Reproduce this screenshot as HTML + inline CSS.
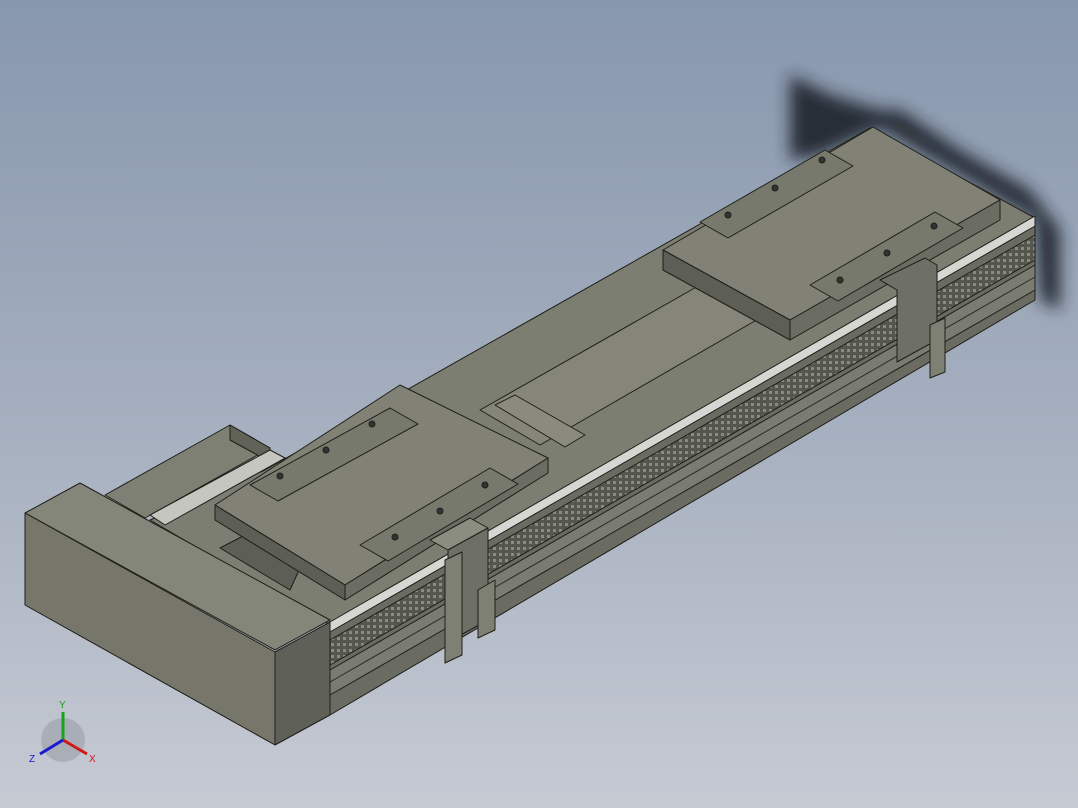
<!DOCTYPE html>
<html><head><meta charset="utf-8"><style>
html,body{margin:0;padding:0;width:1078px;height:808px;overflow:hidden}
body{background:linear-gradient(180deg,#8797ad 0%,#a4aebe 50%,#c6cad3 100%)}
svg{position:absolute;left:0;top:0}
</style></head><body>
<svg width="1078" height="808" viewBox="0 0 1078 808" font-family="Liberation Sans, sans-serif">
<defs>
<filter id="b" x="-20%" y="-20%" width="140%" height="140%"><feGaussianBlur stdDeviation="8"/></filter>
<pattern id="belt" width="6" height="6" patternUnits="userSpaceOnUse"><rect width="6" height="6" fill="#55574f"/><rect x="1" y="1" width="3" height="3" fill="#8a8b80"/></pattern>
</defs>
<g stroke="#1f1f1a" stroke-width="1" stroke-linejoin="round">
<polygon points="790,75 830,95 880,110 900,110 960,150 1030,190 1060,230 1060,310 1040,300 1035,220 960,175 880,128 820,155 790,160" fill="#1e232b" stroke="none" filter="url(#b)" opacity="0.9"/>
<!-- left back block -->
<polygon points="105,495 230,425 270,448 145,518" fill="#7f8074"/>
<polygon points="230,425 270,448 270,462 230,440" fill="#626358"/>
<!-- rail top -->
<polygon points="150,520 265,470 870,128 1035,218 330,625" fill="#7d7e72"/>
<polygon points="480,410 700,285 760,318 540,445" fill="#858679"/>
<polygon points="495,405 515,395 585,435 565,447" fill="#8a8b7e"/>
<polygon points="150,515 270,450 285,458 165,525" fill="#c5c6bf"/>
<!-- rail side -->
<polygon points="330,625 1035,218 1035,300 330,715" fill="#6a6b61"/>
<polygon points="330,640 1035,235 1035,260 330,665" fill="url(#belt)"/>
<polygon points="330,670 1035,265 1035,290 330,695" fill="#7b7c71"/>
<line x1="330" y1="682" x2="1035" y2="277" stroke="#2a2b25"/>
<polygon points="330,622 1035,216 1035,226 330,632" fill="#d6d7d2"/>
<polygon points="220,548 245,535 300,568 290,590" fill="#5d5e55"/>
<!-- end cap -->
<polygon points="25,513 80,483 330,620 275,650" fill="#85867a"/>
<polygon points="25,513 275,652 275,745 25,605" fill="#76766a"/>
<polygon points="275,652 330,622 330,715 275,745" fill="#5f6057"/>
<!-- carriage 1 -->
<polygon points="215,505 400,385 548,458 345,585" fill="#818275"/>
<polygon points="215,505 345,585 345,600 215,520" fill="#5d5e55"/>
<polygon points="345,585 548,458 548,473 345,600" fill="#6b6c62"/>
<polygon points="250,485 390,408 418,424 278,501" fill="#78796d"/>
<polygon points="360,545 490,468 518,484 388,561" fill="#78796d"/>
<circle cx="280" cy="476" r="3" fill="#333"/><circle cx="326" cy="450" r="3" fill="#333"/><circle cx="372" cy="424" r="3" fill="#333"/>
<circle cx="395" cy="537" r="3" fill="#333"/><circle cx="440" cy="511" r="3" fill="#333"/><circle cx="485" cy="485" r="3" fill="#333"/>
<!-- carriage 2 -->
<polygon points="663,250 873,127 1000,200 790,320" fill="#818275"/>
<polygon points="663,250 790,320 790,340 663,270" fill="#5d5e55"/>
<polygon points="790,320 1000,200 1000,220 790,340" fill="#6b6c62"/>
<polygon points="700,222 825,150 853,166 728,238" fill="#78796d"/>
<polygon points="810,285 935,212 963,228 838,301" fill="#78796d"/>
<circle cx="728" cy="215" r="3" fill="#333"/><circle cx="775" cy="188" r="3" fill="#333"/><circle cx="822" cy="160" r="3" fill="#333"/>
<circle cx="840" cy="280" r="3" fill="#333"/><circle cx="887" cy="253" r="3" fill="#333"/><circle cx="934" cy="226" r="3" fill="#333"/>
<!-- brackets -->
<polygon points="430,540 470,518 488,528 448,550" fill="#8c8d81"/>
<polygon points="448,550 488,528 488,620 448,642" fill="#6e6f65"/>
<polygon points="445,560 462,552 462,655 445,663" fill="#7f8074"/>
<polygon points="478,590 495,580 495,630 478,638" fill="#7f8074"/>
<polygon points="880,280 925,258 937,265 937,340 897,362 897,290" fill="#6e6f65"/>
<polygon points="930,325 945,318 945,372 930,378" fill="#7f8074"/>
</g>
<circle cx="63" cy="740" r="22" fill="#9a9ea6" opacity="0.6"/>
<line x1="63" y1="740" x2="63" y2="712" stroke="#1aa01a" stroke-width="3"/>
<line x1="63" y1="740" x2="87" y2="754" stroke="#d01818" stroke-width="3"/>
<line x1="63" y1="740" x2="40" y2="754" stroke="#1a1ad0" stroke-width="3"/>
<text x="59" y="708" font-size="10" fill="#1aa01a">Y</text>
<text x="89" y="762" font-size="10" fill="#d01818">X</text>
<text x="29" y="762" font-size="10" fill="#1a1ad0">Z</text>
</svg>
</body></html>
